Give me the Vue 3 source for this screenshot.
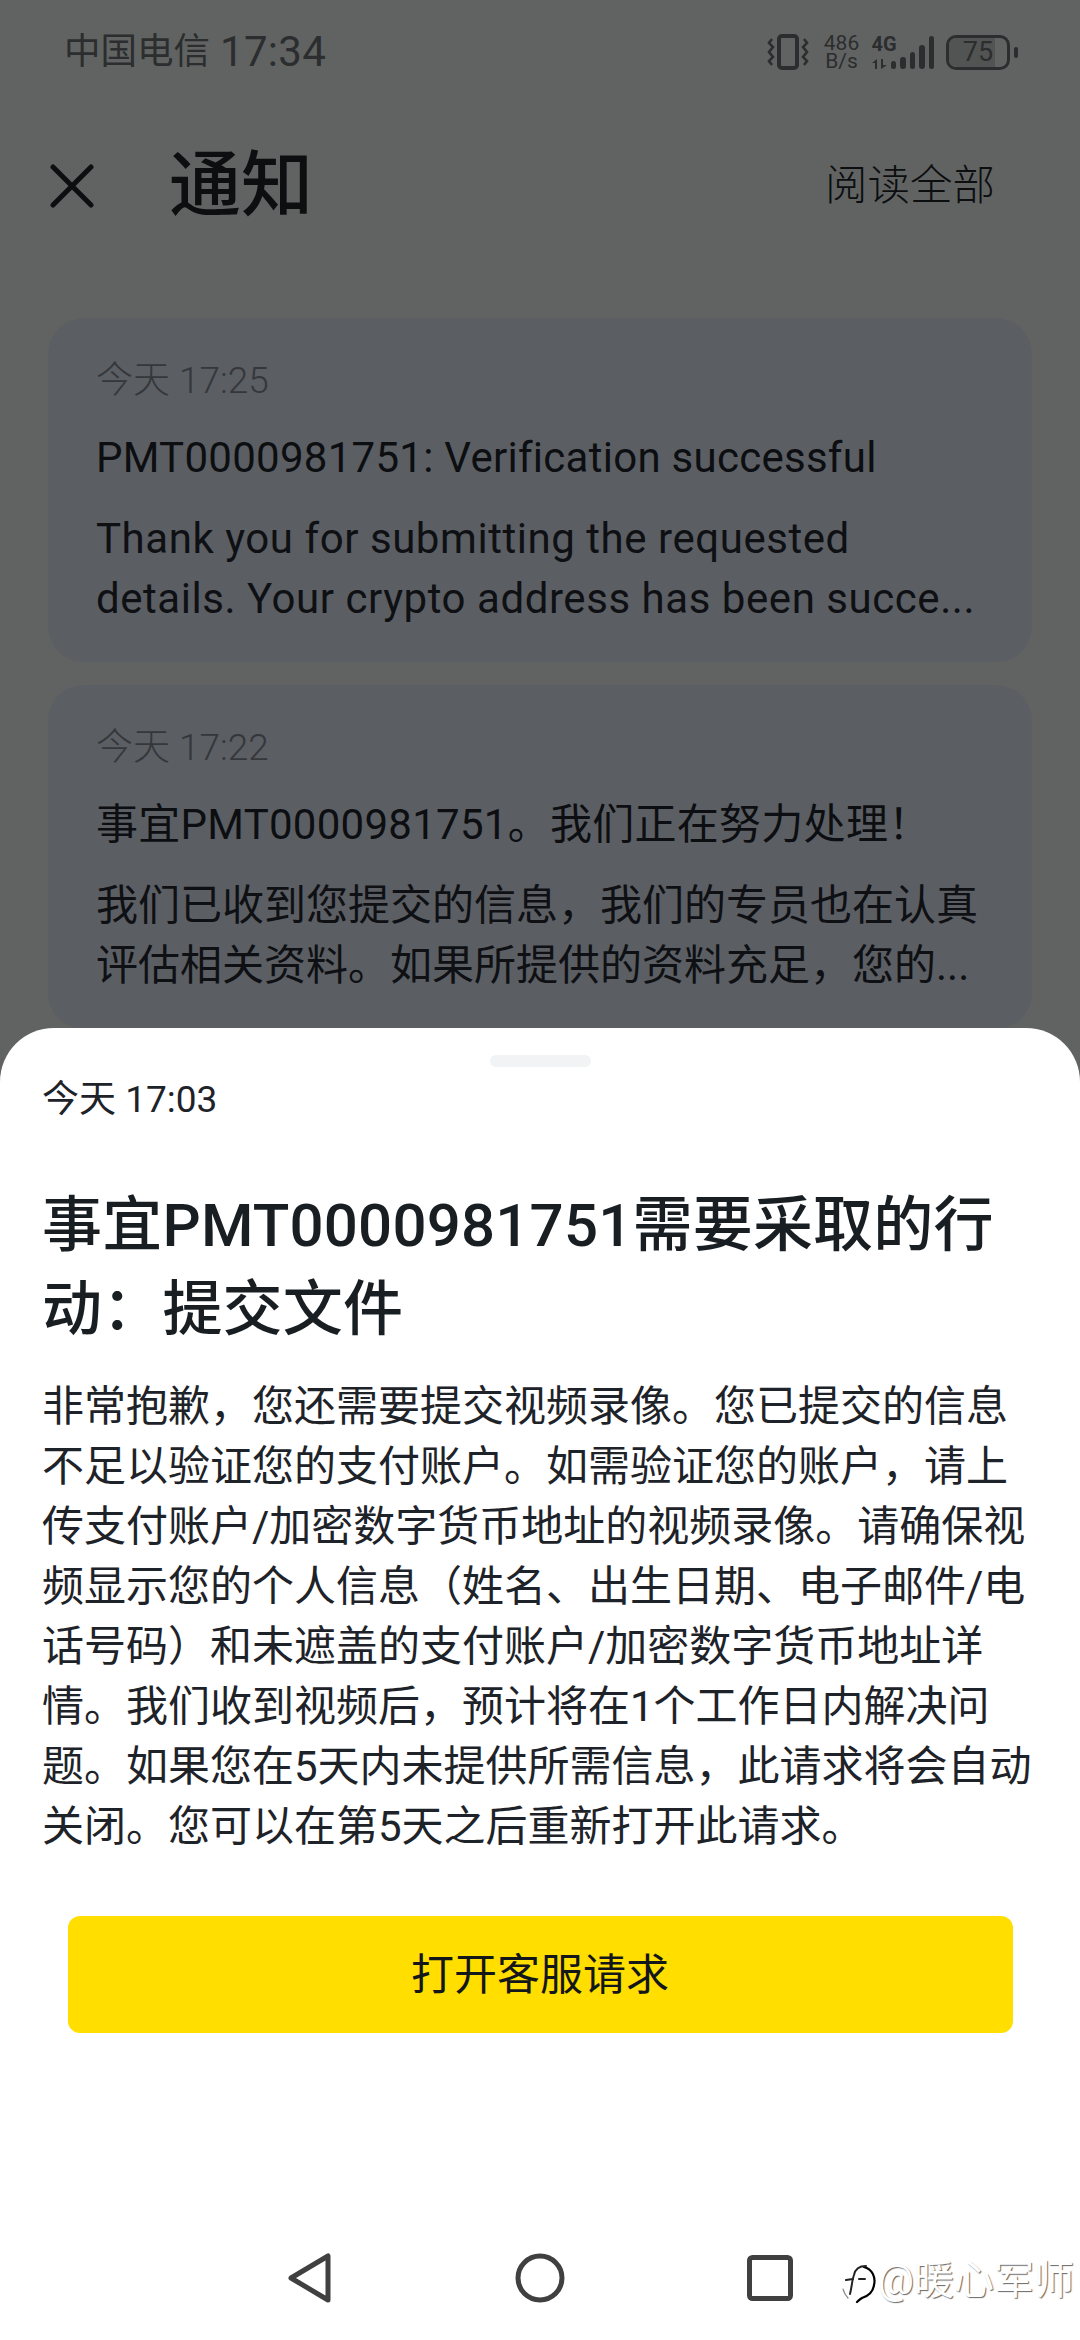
<script setup>
const cards = [
  {
    time: '今天 17:25',
    title: 'PMT0000981751: Verification successful',
    body: 'Thank you for submitting the requested\ndetails. Your crypto address has been succe...',
    latin: true
  },
  {
    time: '今天 17:22',
    title: '事宜PMT0000981751。我们正在努力处理！',
    body: '我们已收到您提交的信息，我们的专员也在认真评估相关资料。如果所提供的资料充足，您的...',
    latin: false
  }
]
const bars = [8, 12, 17, 24, 33]
</script>

<template>
  <div class="phone">
    <div class="page">
      <div class="status">
        <div class="status-left"><span>中国电信</span><span class="clock">17:34</span></div>
        <div class="status-right">
          <svg class="vib" width="42" height="36" viewBox="0 0 42 36" fill="none" stroke="#2b2d2e">
            <rect x="12" y="2" width="18" height="32" rx="3" stroke-width="4" />
            <path d="M5 5 L2 9 L6 13 L2 18 L6 23 L2 27 L5 31" stroke-width="2.6" />
            <path d="M37 5 L40 9 L36 13 L40 18 L36 23 L40 27 L37 31" stroke-width="2.6" />
          </svg>
          <div class="speed"><span>486</span><span>B/s</span></div>
          <div class="signal">
            <div class="net">
              <span class="net-label">4G</span>
              <svg width="17" height="10" viewBox="0 0 17 10" fill="#2b2d2e">
                <path d="M5 0 V10 H3 V4 L0 4 Z" />
                <path d="M9 0 H11 V6 H15 L9 10 Z" />
              </svg>
            </div>
            <div class="bars">
              <i v-for="(h, n) in bars" :key="n" class="bar" :style="{ height: h + 'px' }"></i>
            </div>
          </div>
          <div class="battery">
            <div class="battery-body">
              <div class="battery-fill"></div>
              <span class="battery-num">75</span>
            </div>
            <i class="battery-nub"></i>
          </div>
        </div>
      </div>

      <header class="head">
        <svg class="close" width="44" height="44" viewBox="0 0 44 44" fill="none" stroke="#0c0e10" stroke-width="5" stroke-linecap="round">
          <path d="M3 3 L41 41 M41 3 L3 41" />
        </svg>
        <h1 class="head-title">通知</h1>
        <span class="read-all">阅读全部</span>
      </header>

      <section class="list">
        <article v-for="c in cards" :key="c.time" class="card">
          <div class="card-time">{{ c.time }}</div>
          <div class="card-title">{{ c.title }}</div>
          <p class="card-body" :class="{ latin: c.latin }">{{ c.body }}</p>
        </article>
      </section>
    </div>

    <div class="sheet">
      <i class="handle"></i>
      <div class="sheet-time">今天 17:03</div>
      <h2 class="sheet-title">事宜PMT0000981751需要采取的行动：提交文件</h2>
      <p class="sheet-body">非常抱歉，您还需要提交视频录像。您已提交的信息不足以验证您的支付账户。如需验证您的账户，请上传支付账户/加密数字货币地址的视频录像。请确保视频显示您的个人信息（姓名、出生日期、电子邮件/电话号码）和未遮盖的支付账户/加密数字货币地址详情。我们收到视频后，预计将在1个工作日内解决问题。如果您在5天内未提供所需信息，此请求将会自动关闭。您可以在第5天之后重新打开此请求。</p>
      <button class="cta">打开客服请求</button>

      <nav class="nav">
        <svg width="44" height="50" viewBox="0 0 44 50" fill="none" stroke="#404040" stroke-width="5" stroke-linejoin="round">
          <path d="M40 3 V47 L3 25 Z" />
        </svg>
        <svg width="50" height="50" viewBox="0 0 50 50" fill="none" stroke="#404040" stroke-width="5">
          <circle cx="25" cy="25" r="22" />
        </svg>
        <svg width="46" height="46" viewBox="0 0 46 46" fill="none" stroke="#404040" stroke-width="5" stroke-linejoin="round">
          <rect x="2.5" y="2.5" width="41" height="41" rx="3" />
        </svg>
      </nav>
    </div>

    <div class="mark">
      <svg class="mark-logo" width="34" height="46" viewBox="0 0 34 46" fill="none" stroke-linecap="round">
        <path d="M22 9 C30 11 34 19 32 27 C31 35 26 38 20 40 C18 41 17 42 15 44" stroke="#000" stroke-width="2.2" />
        <path d="M8 36 C10 28 10 22 12 17 C13 12 17 8 24 8" stroke="#222" stroke-width="2" />
        <path d="M4 22 L11 21 M17 21 H23" stroke="#222" stroke-width="2" />
        <path d="M1 31 C2 35 3 37 6 40" stroke="#888" stroke-width="1.2" />
      </svg>
      <span>@暖心军师</span>
    </div>
  </div>
</template>

<style>
html, body { margin: 0; background: #fff; }
</style>

<style scoped>
.phone {
  position: relative;
  width: 1080px;
  height: 2340px;
  overflow: hidden;
  background: #616362;
  font-family: Roboto, "Noto Sans CJK SC", sans-serif;
}
.page { display: flex; flex-direction: column; }

.status {
  height: 104px;
  padding: 0 62px 0 64px;
  display: flex;
  justify-content: space-between;
  align-items: center;
  box-sizing: border-box;
  color: #2b2d2e;
}
.status-left {
  display: flex; align-items: center; gap: 10px;
  font-size: 36.5px; line-height: 44px; white-space: nowrap;
}
.clock { font-size: 42px; letter-spacing: 0.3px; }
.status-right { display: flex; align-items: center; height: 36px; }
.vib { margin-right: 15px; }
.speed {
  display: flex; flex-direction: column; align-items: center;
  font-size: 21px; line-height: 18px; width: 36px; margin-right: 12px;
}
.signal { display: flex; align-items: flex-end; margin-right: 12px; height: 34px; }
.net { display: flex; flex-direction: column; width: 24px; gap: 6px; }
.net-label { font-size: 20px; line-height: 18px; font-weight: 700; }
.bars { display: flex; align-items: flex-end; gap: 4px; margin-left: -5px; }
.bar { width: 5.5px; background: #2b2d2e; border-radius: 3px; display: block; }
.battery { display: flex; align-items: center; gap: 4px; }
.battery-body {
  position: relative;
  width: 64px; height: 35px; box-sizing: border-box;
  border: 3px solid #2b2d2e; border-radius: 10px;
  display: flex; align-items: center; justify-content: center;
  overflow: hidden;
}
.battery-fill { position: absolute; left: 0; top: 0; bottom: 0; width: 80%; background: #525453; }
.battery-num { position: relative; font-size: 27px; line-height: 30px; }
.battery-nub { width: 4px; height: 11px; border-radius: 2px; background: #2b2d2e; display: block; }

.head {
  height: 114px;
  margin-top: 25px;
  padding: 0 85px 0 50px;
  display: flex;
  align-items: center;
  color: #0c0e10;
}
.close { flex: none; }
.head-title {
  margin: 0 0 0 75px;
  font-size: 72px;
  line-height: 80px;
  font-weight: 500;
  flex: 1;
}
.read-all { font-size: 42.5px; line-height: 50px; color: #0c0e10; font-weight: 300; }

.list {
  padding: 0 48px;
  margin-top: 75px;
  display: flex;
  flex-direction: column;
  gap: 23px;
}
.card {
  box-sizing: border-box;
  height: 344px;
  padding: 38px 49px 0 48px;
  border-radius: 36px;
  background: #5b5e63;
  overflow: hidden;
}
.card-time { font-size: 37px; line-height: 50px; color: #35373b; font-weight: 300; }
.card-title {
  margin-top: 24px;
  font-size: 42px; line-height: 56px;
  color: #0c0e11; white-space: nowrap;
  letter-spacing: 0.27px;
}
.card-body {
  margin: 23px 0 0;
  font-size: 42px; line-height: 60px;
  color: #0e1013;
  white-space: pre-line;
}
.card-body.latin { letter-spacing: 0.55px; }

.sheet {
  position: absolute;
  left: 0; right: 0; bottom: 0;
  height: 1312px;
  box-sizing: border-box;
  background: #fff;
  border-radius: 54px 54px 0 0;
  padding: 27px 42px 0;
  display: flex;
  flex-direction: column;
}
.handle {
  display: block;
  align-self: center;
  width: 101px; height: 12px;
  border-radius: 6px;
  background: #f2f3f5;
}
.sheet-time {
  margin-top: 8px;
  font-size: 37px; line-height: 50px;
  color: #1e2329;
}
.sheet-title {
  margin: 59px 0 0;
  font-size: 60px; line-height: 84px;
  font-weight: 500;
  letter-spacing: 0.2px;
  color: #181e22;
}
.sheet-body {
  margin: 25px 0 0;
  font-size: 42px; line-height: 60px;
  color: #1e2329;
}
.cta {
  align-self: center;
  margin-top: 59px;
  width: 945px; height: 117px;
  border: 0; border-radius: 12px;
  background: #ffde00;
  color: #14171a;
  font: 400 43px/50px Roboto, "Noto Sans CJK SC", sans-serif;
}
.nav {
  position: absolute;
  left: 288px; top: 1225px;
  width: 505px;
  display: flex;
  align-items: center;
  justify-content: space-between;
}

.mark {
  position: absolute;
  left: 842px; top: 2256px;
  display: flex;
  align-items: center;
  gap: 2px;
  font-size: 40px; line-height: 50px;
  color: #fff;
  white-space: nowrap;
  text-shadow: 1px 1px 1px #666;
}
.mark-logo { flex: none; }
</style>
